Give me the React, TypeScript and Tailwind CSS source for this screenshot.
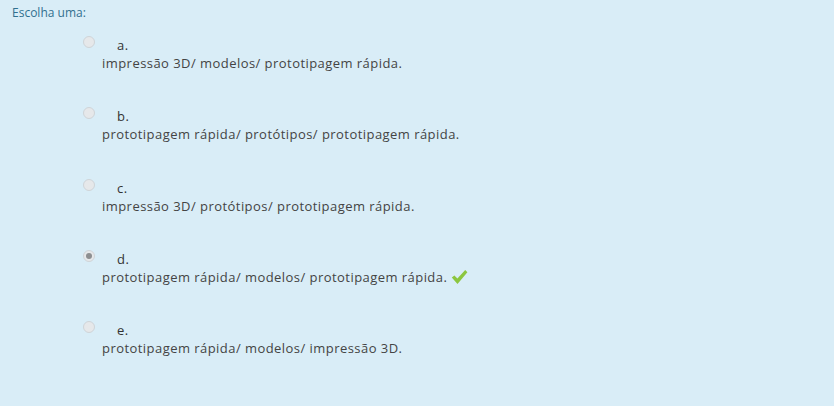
import React from 'react';

interface OptionProps {
  letter: string;
  text: string;
  checked?: boolean;
  correct?: boolean;
}

const options: OptionProps[] = [
  { letter: 'a.', text: 'impressão 3D/ modelos/ prototipagem rápida.' },
  { letter: 'b.', text: 'prototipagem rápida/ protótipos/ prototipagem rápida.' },
  { letter: 'c.', text: 'impressão 3D/ protótipos/ prototipagem rápida.' },
  { letter: 'd.', text: 'prototipagem rápida/ modelos/ prototipagem rápida.', checked: true, correct: true },
  { letter: 'e.', text: 'prototipagem rápida/ modelos/ impressão 3D.' },
];

const Radio = ({ checked }: { checked?: boolean }) => (
  <span className="flex h-[12px] w-[12px] items-center justify-center rounded-full border border-[#cfd4d8] bg-[#e6e8ea]">
    {checked && <span className="h-[6px] w-[6px] rounded-full bg-[#8d8f91]" />}
  </span>
);

const Check = () => (
  <svg width="17" height="16" viewBox="0 0 17 16" className="ml-[4px] inline-block align-[-3px]">
    <path d="M0.8 8.6 L3.4 6.4 L6.4 9.6 L14.2 1 L16.4 3.2 L6.5 15 Z" fill="#8cc63f" />
  </svg>
);

const OptionRow: React.FC<OptionProps> = ({ letter, text, checked, correct }) => (
  <div className="h-[71.3px]">
    <div className="flex h-[12px] items-center">
      <Radio checked={checked} />
      <span className="ml-[22px] mt-[6px] leading-[18px] text-[#333]">{letter}</span>
    </div>
    <div className="ml-[19px] mt-[6px] leading-[18px] text-[#444]">
      {text}
      {correct && <Check />}
    </div>
  </div>
);

export default function App() {
  return (
    <div
      className="h-[406px] w-[834px] bg-[#d9edf7] pl-[12px] pt-[4px] text-[13px] tracking-[0.45px]"
      style={{ fontFamily: '"Open Sans", sans-serif' }}
    >
      <div className="text-[12px] tracking-normal text-[#31708f]">Escolha uma:</div>
      <div className="ml-[71px] mt-[14px]">
        {options.map((o) => (
          <OptionRow key={o.letter} {...o} />
        ))}
      </div>
    </div>
  );
}
